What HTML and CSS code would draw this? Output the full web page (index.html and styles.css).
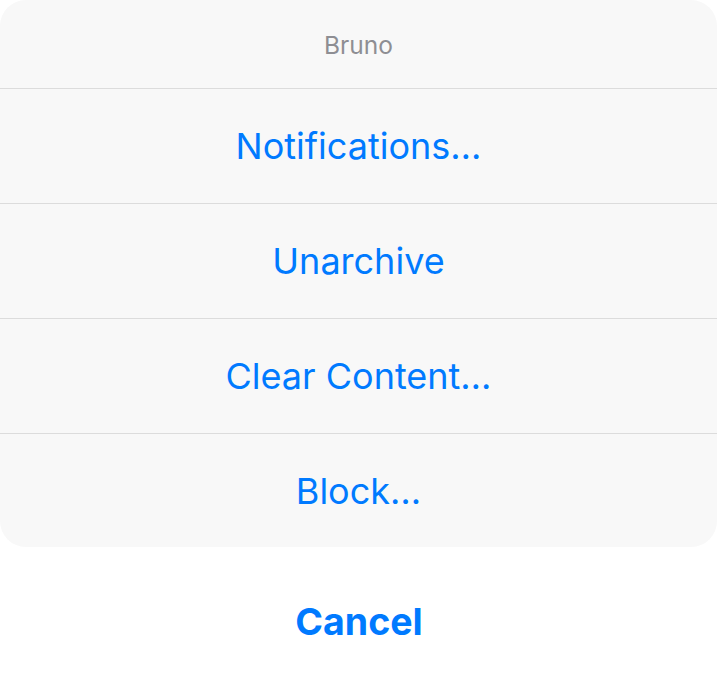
FILE: index.html
```html
<!DOCTYPE html>
<html>
<head>
<meta charset="utf-8">
<link rel="stylesheet" href="styles.css">
</head>
<body>
<div class="sheet">
  <div class="group">
    <div class="title">Bruno</div>
    <div class="action">Notifications…</div>
    <div class="action">Unarchive</div>
    <div class="action">Clear Content…</div>
    <div class="action">Block…</div>
  </div>
  <div class="cancel">Cancel</div>
</div>
</body>
</html>
```
FILE: styles.css
```css
html, body {
  margin: 0;
  padding: 0;
  background: #ffffff;
}
body {
  width: 718px;
  height: 678px;
  overflow: hidden;
  font-family: Inter, "Noto Sans", sans-serif;
}
.sheet {
  display: flex;
  flex-direction: column;
}
.group {
  margin: 0 1px 0 0;
  background: #f8f8f8;
  border-radius: 26px;
  display: flex;
  flex-direction: column;
  overflow: hidden;
}
.title {
  height: 89px;
  padding-top: 2px;
  box-sizing: border-box;
  display: flex;
  align-items: center;
  justify-content: center;
  color: #8e8e93;
  font-size: 24.5px;
  border-bottom: 1px solid #dcdcdc;
}
.action {
  height: 114px;
  display: flex;
  align-items: center;
  justify-content: center;
  color: #007aff;
  font-size: 36px;
  border-bottom: 1px solid #dcdcdc;
}
.action:last-child {
  border-bottom: none;
  height: 113px;
}
.cancel {
  height: 148px;
  display: flex;
  align-items: center;
  justify-content: center;
  color: #007aff;
  font-size: 37.5px;
  font-weight: 700;
}
```
